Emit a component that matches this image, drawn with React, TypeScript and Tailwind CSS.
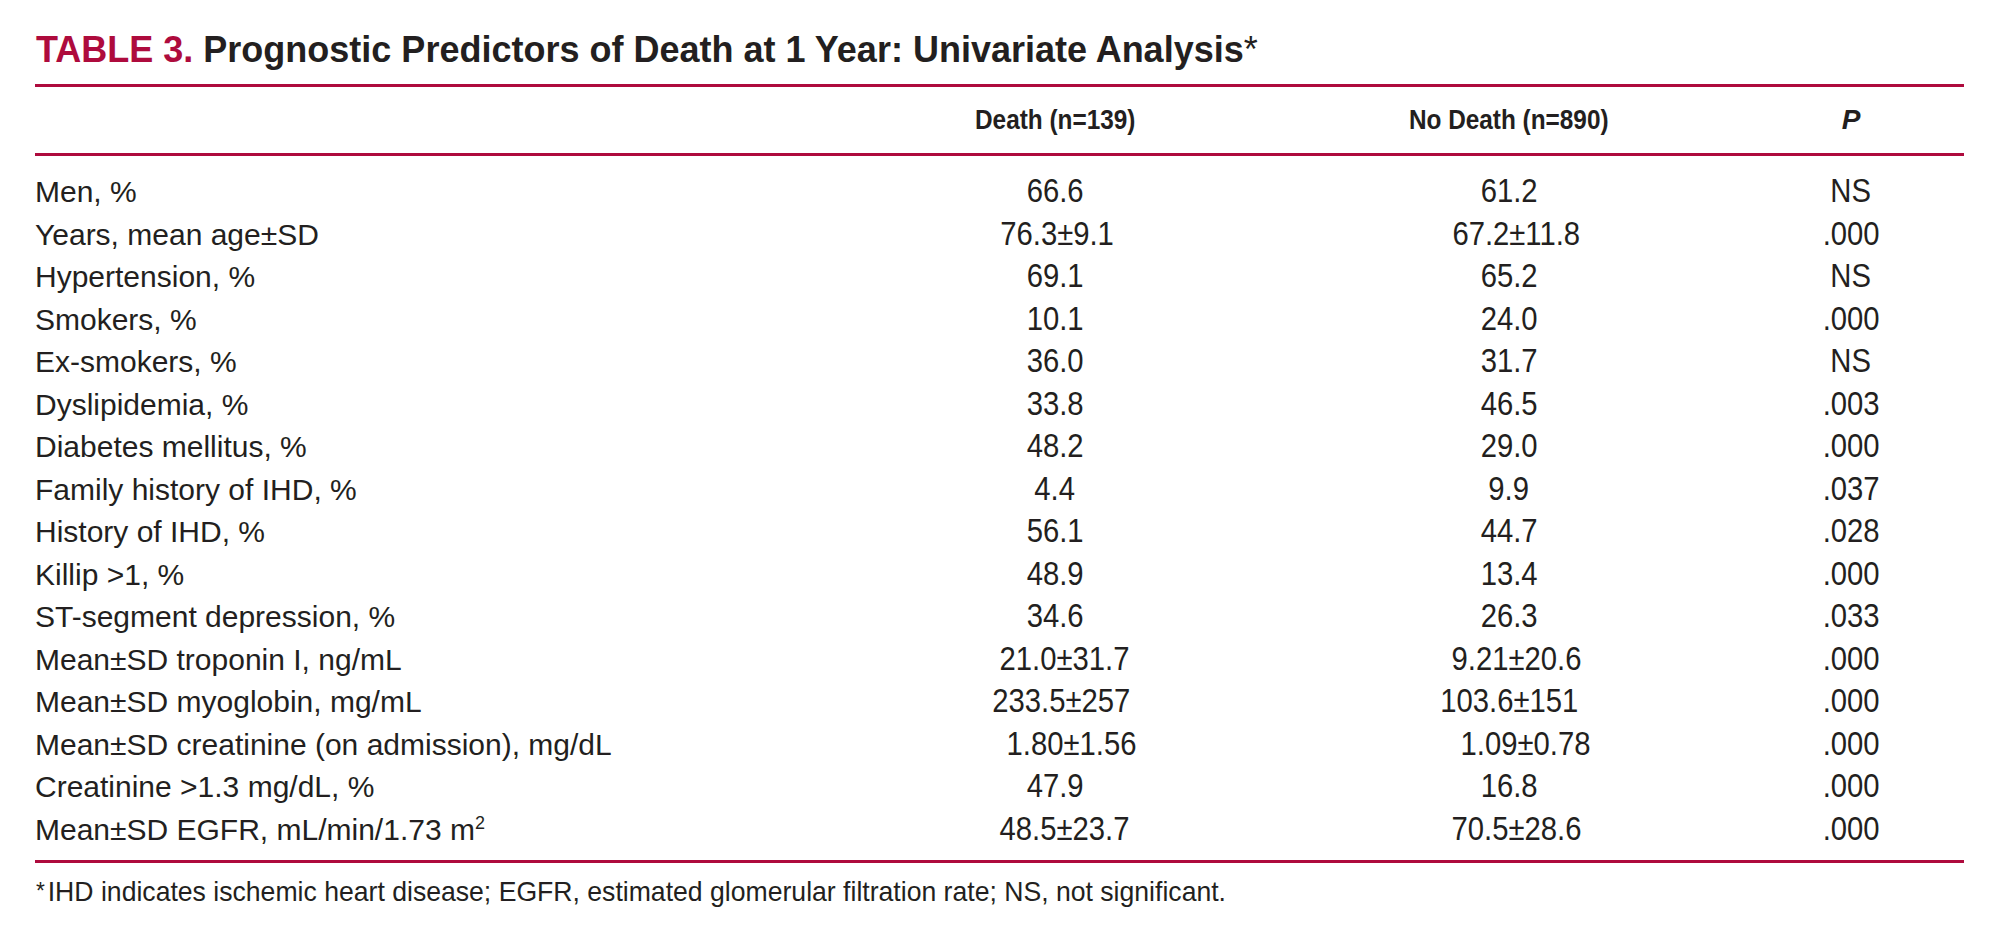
const rows = [
  { label: "Men, %", death: "66.6", noDeath: "61.2", p: "NS" },
  { label: "Years, mean age±SD", death: "76.3±9.1", noDeath: "67.2±11.8", p: ".000", dShift: "translate-x-[2px]", nShift: "translate-x-[7px]" },
  { label: "Hypertension, %", death: "69.1", noDeath: "65.2", p: "NS" },
  { label: "Smokers, %", death: "10.1", noDeath: "24.0", p: ".000" },
  { label: "Ex-smokers, %", death: "36.0", noDeath: "31.7", p: "NS" },
  { label: "Dyslipidemia, %", death: "33.8", noDeath: "46.5", p: ".003" },
  { label: "Diabetes mellitus, %", death: "48.2", noDeath: "29.0", p: ".000" },
  { label: "Family history of IHD, %", death: "4.4", noDeath: "9.9", p: ".037" },
  { label: "History of IHD, %", death: "56.1", noDeath: "44.7", p: ".028" },
  { label: "Killip >1, %", death: "48.9", noDeath: "13.4", p: ".000" },
  { label: "ST-segment depression, %", death: "34.6", noDeath: "26.3", p: ".033" },
  { label: "Mean±SD troponin I, ng/mL", death: "21.0±31.7", noDeath: "9.21±20.6", p: ".000", dShift: "translate-x-[10px]", nShift: "translate-x-[8px]" },
  { label: "Mean±SD myoglobin, mg/mL", death: "233.5±257", noDeath: "103.6±151", p: ".000", dShift: "translate-x-[6px]" },
  { label: "Mean±SD creatinine (on admission), mg/dL", death: "1.80±1.56", noDeath: "1.09±0.78", p: ".000", dShift: "translate-x-[17px]", nShift: "translate-x-[17px]" },
  { label: "Creatinine >1.3 mg/dL, %", death: "47.9", noDeath: "16.8", p: ".000" },
  { label: "EGFR", death: "48.5±23.7", noDeath: "70.5±28.6", p: ".000", dShift: "translate-x-[10px]", nShift: "translate-x-[8px]" },
]

const cols = "grid grid-cols-[820px_400px_508px_176px]"

function Cell({ value, shift }: { value: string; shift?: string }) {
  return (
    <div className="text-center">
      <span className={`inline-block text-[34px] leading-[40px] scale-x-[0.86] ${shift ?? ""}`}>{value}</span>
    </div>
  )
}

export default function App() {
  return (
    <div className="w-[2008px] h-[944px] bg-white text-[#231f20] font-['Liberation_Sans',Arial,sans-serif] pt-[32px]">
      {/* Title */}
      <div className="pl-[36px] h-[36px] text-[36px] leading-[36px] font-bold whitespace-nowrap">
        <span className="text-[#ae0b3d]">TABLE 3.</span> Prognostic Predictors of Death at 1 Year: Univariate Analysis
        <span className="font-normal">*</span>
      </div>

      <div className="ml-[35px] w-[1929px] mt-[16px]">
        <div className="h-[3px] bg-[#ae0b3d]" />

        {/* Header */}
        <div className={`${cols} h-[66px] text-[28px] leading-[66px] font-bold`}>
          <div />
          <div className="text-center">
            <span className="inline-block scale-x-[0.87]">Death (n=139)</span>
          </div>
          <div className="text-center">
            <span className="inline-block scale-x-[0.87]">No Death (n=890)</span>
          </div>
          <div className="text-center italic">P</div>
        </div>

        <div className="h-[3px] bg-[#ae0b3d]" />

        {/* Body */}
        <div className="pt-[14px] pb-[10px]">
          {rows.map((r) => (
            <div key={r.label} className={`${cols} h-[42.5px] items-baseline`}>
              <div className="text-[30px] leading-[42.5px] whitespace-nowrap">
                {r.label === "EGFR" ? (
                  <>
                    Mean±SD EGFR, mL/min/1.73 m<sup className="text-[18px] -top-[11px]">2</sup>
                  </>
                ) : (
                  r.label
                )}
              </div>
              <Cell value={r.death} shift={r.dShift} />
              <Cell value={r.noDeath} shift={r.nShift} />
              <Cell value={r.p} />
            </div>
          ))}
        </div>

        <div className="h-[3px] bg-[#ae0b3d]" />
      </div>

      {/* Footnote */}
      <div className="pl-[36px] mt-[13px] h-[32px]">
        <span className="inline-block origin-left scale-x-[0.95] text-[28px] leading-[32px] whitespace-nowrap">
          <span className="text-[24px] relative -top-[2px] mr-[3px]">*</span>IHD indicates ischemic heart disease; EGFR, estimated glomerular filtration rate; NS, not significant.
        </span>
      </div>
    </div>
  )
}
